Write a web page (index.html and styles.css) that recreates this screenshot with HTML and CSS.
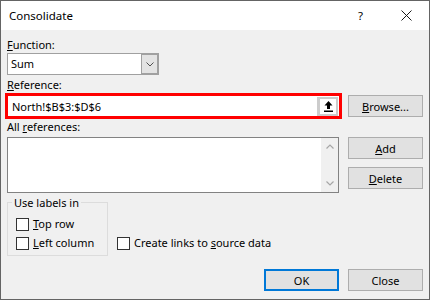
FILE: index.html
```html
<!DOCTYPE html>
<html lang='en'>
<head>
	<meta charset='UTF-8'>
	<title>Consolidate</title>
	<link rel="stylesheet" href="styles.css">
</head>
<body>
	<div class='dialog'>
		<div class='title-bar'>
			<span class='title'>Consolidate</span>
			<span class='help'>?</span>
			<svg class='close-x' width='11' height='11' viewBox='0 0 11 11'><path d='M0.5 0.5 L10.5 10.5 M10.5 0.5 L0.5 10.5' stroke='#1a1a1a' stroke-width='1' fill='none'/></svg>
		</div>

		<div class='content'>
			<div class='field-label label-function'><u>F</u>unction:</div>
			<div class='combo'>
				<span class='combo-value'>Sum</span>
				<span class='combo-btn'>
					<svg width='8' height='5' viewBox='0 0 8 5'><path d='M0.5 0.5 L4 4 L7.5 0.5' stroke='#505050' stroke-width='1' fill='none'/></svg>
				</span>
			</div>

			<div class='field-label label-reference'><u>R</u>eference:</div>
			<div class='ref-row'>
				<div class='ref-field'>
					<span class='ref-value'>North!$B$3:$D$6</span>
					<span class='collapse-btn'>
						<svg width='9' height='11' viewBox='0 0 9 11'>
							<path d='M4.5 0 L8.5 4.5 L6 4.5 L6 8 L3 8 L3 4.5 L0.5 4.5 Z' fill='#000'/>
							<rect x='0' y='9.5' width='9' height='1.5' fill='#000'/>
						</svg>
					</span>
				</div>
				<button class='btn btn-browse'><u>B</u>rowse...</button>
			</div>

			<div class='field-label label-all'>All <u>r</u>eferences:</div>
			<div class='list-row'>
				<div class='ref-list'>
					<div class='scrollbar'>
						<span class='scroll-arrow'><svg width='8' height='5' viewBox='0 0 8 5'><path d='M0.5 4.5 L4 1 L7.5 4.5' stroke='#a6a6a6' stroke-width='1.2' fill='none'/></svg></span>
						<span class='scroll-arrow'><svg width='8' height='5' viewBox='0 0 8 5'><path d='M0.5 0.5 L4 4 L7.5 0.5' stroke='#a6a6a6' stroke-width='1.2' fill='none'/></svg></span>
					</div>
				</div>
				<div class='btn-col'>
					<button class='btn'><u>A</u>dd</button>
					<button class='btn'><u>D</u>elete</button>
				</div>
			</div>

			<div class='options-row'>
				<fieldset class='label-group'>
					<legend>Use labels in</legend>
					<div class='check check-top'><span class='check-box'></span><span><u>T</u>op row</span></div>
					<div class='check check-left'><span class='check-box'></span><span><u>L</u>eft column</span></div>
				</fieldset>
				<div class='check check-links'><span class='check-box'></span><span>Create links to <u>s</u>ource data</span></div>
			</div>

			<div class='footer'>
				<button class='btn btn-ok'>OK</button>
				<button class='btn'>Close</button>
			</div>
		</div>
	</div>
</body>
</html>
```

FILE: styles.css
```css
html, body{
	margin:0;
	padding:0;
	background:#f0f0f0;
}
.dialog{
	display:flex;
	flex-direction:column;
	width:430px;
	height:300px;
	box-sizing:border-box;
	border:1px solid #646464;
	background-color:#f0f0f0;
	font-family:"Noto Sans", "Open Sans", sans-serif;
	font-size:11px;
	line-height:15px;
	color:#000;
}
.title-bar{
	display:flex;
	align-items:center;
	height:29px;
	flex:0 0 auto;
	padding-left:8px;
	background-color:#fff;
	font-size:11.5px;
}
.title{
	flex:1 1 auto;
}
.help{
	margin-right:38px;
}
.close-x{
	margin-right:17px;
}
.content{
	display:flex;
	flex-direction:column;
	padding:0 6px;
}
.field-label{
	height:15px;
}
.label-function{
	margin-top:7px;
	margin-bottom:1px;
}
.label-reference{
	margin-top:2px;
	margin-bottom:1px;
}
.label-all{
	margin-bottom:3px;
}
.combo{
	display:flex;
	align-items:stretch;
	width:152px;
	height:22px;
	box-sizing:border-box;
	border:1px solid #a0a0a0;
	background-color:#fff;
}
.combo-value{
	flex:1 1 auto;
	padding-left:3px;
	line-height:20px;
}
.combo-btn{
	display:flex;
	align-items:center;
	justify-content:center;
	width:17px;
	box-sizing:border-box;
	border:1px solid #a0a0a0;
	background-color:#e3e3e3;
}
.ref-row{
	display:flex;
	align-items:center;
	height:26px;
}
.ref-field{
	display:flex;
	align-items:center;
	width:331px;
	height:20px;
	margin-left:1px;
	box-sizing:border-box;
	outline:3px solid #ff0000;
	background-color:#fff;
}
.ref-value{
	flex:1 1 auto;
	padding-left:4px;
}
.collapse-btn{
	display:flex;
	align-items:center;
	justify-content:center;
	width:21px;
	height:19px;
	margin-right:1px;
	box-sizing:border-box;
	border:2px solid #cccccc;
	border-left-width:3px;
	background-color:#fff;
}
.btn{
	width:75px;
	height:22px;
	box-sizing:border-box;
	padding:0;
	border:1px solid #adadad;
	background-color:#e1e1e1;
	font:inherit;
	color:#000;
}
.btn-browse{
	margin-left:9px;
}
.btn-ok{
	border:2px solid #0078d7;
}
.list-row{
	display:flex;
	gap:9px;
	height:56px;
}
.ref-list{
	display:flex;
	justify-content:flex-end;
	width:332px;
	box-sizing:border-box;
	border:1px solid #828282;
	background-color:#fff;
}
.scrollbar{
	display:flex;
	flex-direction:column;
	justify-content:space-between;
	width:17px;
	background-color:#f0f0f0;
}
.scroll-arrow{
	display:flex;
	align-items:center;
	justify-content:center;
	height:17px;
}
.btn-col{
	display:flex;
	flex-direction:column;
	gap:8px;
}
.options-row{
	display:flex;
	align-items:flex-start;
	margin-top:2px;
}
.label-group{
	width:101px;
	box-sizing:border-box;
	margin:0;
	padding:6px 0 5px 0;
	border:1px solid #dcdcdc;
}
.label-group legend{
	margin-left:4px;
	padding:0 2px;
	line-height:15px;
}
.check{
	display:flex;
	align-items:flex-start;
	height:15px;
	white-space:nowrap;
}
.label-group .check{
	margin-left:8px;
}
.check-left{
	margin-top:4px;
}
.check-box{
	width:13px;
	height:13px;
	box-sizing:border-box;
	margin-top:2px;
	margin-right:4px;
	border:1px solid #333;
	background-color:#fff;
}
.check-links{
	align-self:flex-end;
	margin-left:9px;
	margin-bottom:6px;
}
.footer{
	display:flex;
	justify-content:flex-end;
	gap:9px;
	margin-top:13px;
}
```
